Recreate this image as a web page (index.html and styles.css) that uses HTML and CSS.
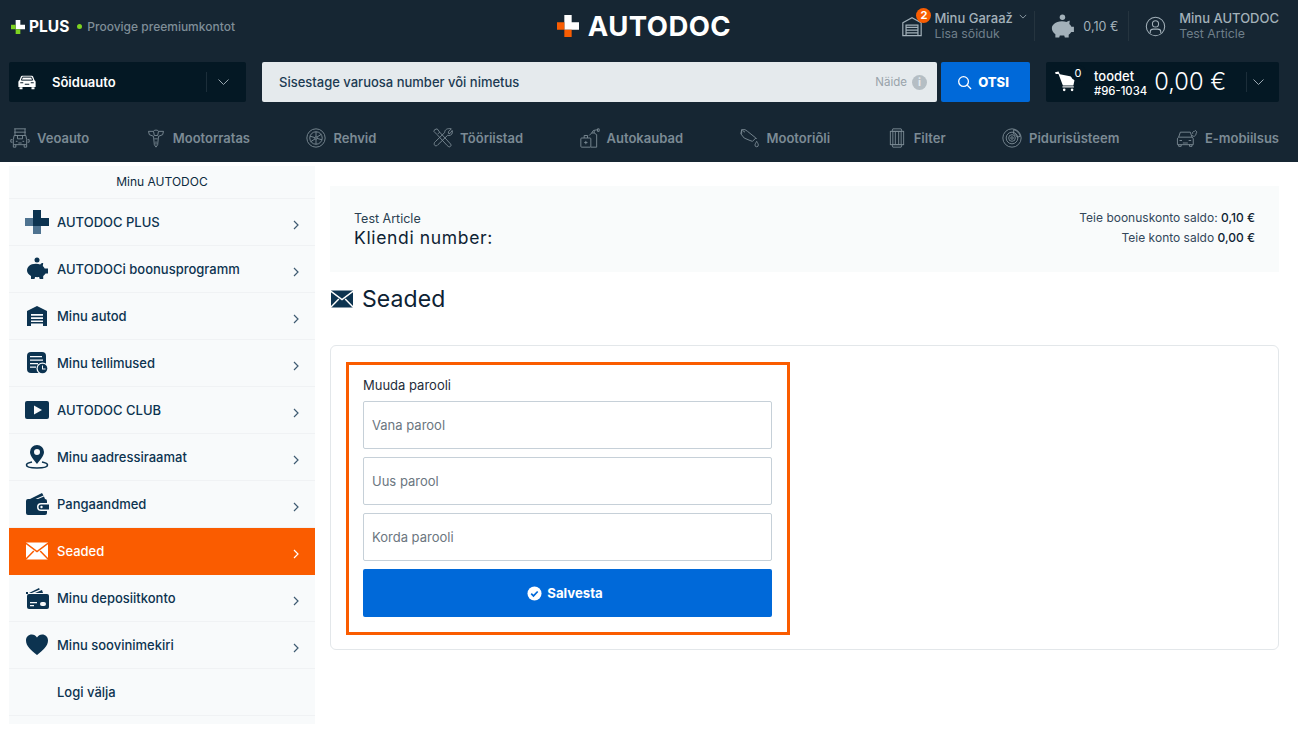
FILE: index.html
```html
<!DOCTYPE html>
<html lang="et">
<head>
<meta charset="utf-8">
<title>AUTODOC – Seaded</title>
<link rel="stylesheet" href="styles.css">
</head>
<body>
<header class="hdr">
  <div class="top">
    <div class="plus">
      <svg class="plus-ic" viewBox="0 0 24 24"><path fill="#fff" d="M8 0h8v8h8v8H8z"/><path fill="#7ed321" d="M0 8h8v8h8v8H8v-8H0z"/></svg>
      <span class="plus-t">PLUS</span>
      <span class="dot"></span>
      <span class="plus-s">Proovige preemiumkontot</span>
    </div>
    <div class="logo">
      <svg class="logo-ic" viewBox="0 0 24 24"><path fill="#fff" d="M8 0h8v8h8v8H8z"/><path fill="#f95d02" d="M0 8h8v8h8v8H8v-8H0z"/></svg>
      <span class="logo-t">AUTODOC</span>
    </div>
    <div class="acct">
      <div class="garage">
        <span class="garage-ic">
          <svg class="ic-g" viewBox="0 0 24 24"><path d="M2 8.500 12 3l10 5.500V22.500H2zM5.500 22.500V11h13v11.500M5.500 13.500h13M5.500 16.500h13M5.500 19.500h13"/></svg>
          <span class="badge">2</span>
        </span>
        <div class="acct-txt">
          <div class="a1">Minu Garaaž <svg class="chev-s" viewBox="0 0 10 6"><path d="M1 1l4 4 4-4"/></svg></div>
          <div class="a2">Lisa sõiduk</div>
        </div>
      </div>
      <div class="bonus">
        <svg class="pig-top" viewBox="2.500 .5 21 22"><circle cx="12.500" cy="3.500" r="2.500"/><path d="M5 9.500c1.500-1.500 4-2.300 7-2.300 1.600 0 3 .2 4.200.7.800-.8 2-1.300 3-1.300l-.4 3c.9.700 1.500 1.500 1.900 2.500H23v5h-2.400c-.6 1-1.400 1.800-2.400 2.400V22h-3.500l-.6-1.900c-1.300.2-2.700.2-4 0L9.500 22H6v-3c-2-1.400-3.200-3.300-3.200-5.500 0-1.600.8-3 2.200-4z"/></svg>
        <span class="bonus-v">0,10 €</span>
      </div>
      <div class="user">
        <svg class="ic-u" viewBox="0 0 24 24"><circle cx="12" cy="12" r="10.500"/><circle cx="12" cy="9" r="3.500"/><path d="M6 19.500v-1.500c0-2 1.500-3 3.500-3h5c2 0 3.500 1 3.500 3v1.500"/></svg>
        <div class="acct-txt">
          <div class="a1">Minu AUTODOC</div>
          <div class="a2">Test Article</div>
        </div>
      </div>
    </div>
  </div>

  <div class="bar">
    <div class="veh">
      <svg class="veh-ic" viewBox="0 0 24 20"><path d="M5.500 1.500h13c.8 0 1.300.4 1.600 1.100L22 7.500c1 .6 1.500 1.500 1.500 2.500v6.500h-23V10c0-1 .5-1.900 1.500-2.500l1.900-4.900c.3-.7.800-1.100 1.600-1.100z"/><path class="veh-cut" d="M6 3.500h12l1.500 4h-15zM3 11h4M17 11h4M9 13h6"/><path d="M2 17h4v2.500H2zM18 17h4v2.500h-4z"/></svg>
      <span class="veh-t">Sõiduauto</span>
      <span class="veh-chev"><svg class="chev" viewBox="0 0 12 8"><path d="M1 1.500l5 5 5-5"/></svg></span>
    </div>
    <div class="srch">
      <input class="srch-in" type="text" placeholder="Sisestage varuosa number või nimetus">
      <span class="naide">Näide</span>
      <span class="info">i</span>
    </div>
    <button class="otsi" type="button">
      <svg class="otsi-ic" viewBox="0 0 16 16"><circle cx="7" cy="7" r="5.200"/><path d="M11 11l4 4"/></svg>
      OTSI
    </button>
    <div class="cart">
      <span class="cart-ic">
        <svg class="cart-sv" viewBox="0 0 24 24"><path d="M0 1.500l4-.8 1.500 3 17.500 3.500-2 9.300H9L4 3.500 .8 3.500z"/><path d="M8.500 17.500h13v1.300h-13z"/><circle cx="10.500" cy="21.500" r="1.500"/><circle cx="19.500" cy="21.500" r="1.500"/></svg>
        <span class="cart-n">0</span>
      </span>
      <div class="cart-t"><div class="c1">toodet</div><div class="c2">#96-1034</div></div>
      <span class="cart-p">0,00 €</span>
      <span class="cart-chev"><svg class="chev" viewBox="0 0 12 8"><path d="M1 1.500l5 5 5-5"/></svg></span>
    </div>
  </div>

  <nav class="nav">
    <a class="nav-i"><svg viewBox="0 0 24 24"><path d="M5 1h14M6 1v8M18 1v8M5 5h14M5 9h14l1 5v6H4v-6zM3 14H1v3h2M21 14h2v3h-2M4 20v3h3v-3M20 20v3h-3v-3M7 16h2M15 16h2M10 18h4M9 9v4h6V9"/></svg>Veoauto</a>
    <a class="nav-i"><svg viewBox="0 0 24 24"><path d="M9 4c0-2 6-2 6 0l-1 5h-4zM9 4H3l1 4 5 2M15 4h6l-1 4-5 2M9 10l1 10 2 3 2-3 1-10M10 13h4M12 16v4"/></svg>Mootorratas</a>
    <a class="nav-i"><svg viewBox="0 0 24 24"><circle cx="12" cy="12" r="11"/><circle cx="12" cy="12" r="7.500"/><circle cx="12" cy="12" r="1.500"/><path d="M12 4.500v6M12 13.500v6M4.800 9.800l5.800 1.700M13.400 12.500l5.800 1.700M5.500 16.500l5.500-3.500M13 11l5.500-3.500"/></svg>Rehvid</a>
    <a class="nav-i"><svg viewBox="0 0 24 24"><path d="M2 2l3-1 3 4 12 13c2 2 2 3 1 4s-2 1-4-1L5 8 1 4zM6 7l2-2"/><path d="M22 1l-3.500 3.500 0 2 2 0L23 3c1 3-.5 6-4 6l-1.500-.2L6 20c-1.500 2-5 2-4.500-1.500 0-1 .5-1.500 1.200-2L14 5.500C14 2 17 0 22 1z"/></svg>Tööriistad</a>
    <a class="nav-i"><svg viewBox="0 0 24 24"><rect x="1" y="12" width="12" height="11" rx="1"/><path d="M5 12V9h4v3M7 15.500v4M5 17.500h4M13 23h7V8l-3-2h-3l-3 3M14 6l2-3 5-1M21 1v3h2V1zM17 6V3"/></svg>Autokaubad</a>
    <a class="nav-i"><svg viewBox="0 0 24 24"><path d="M2 2h4l3 2 10 8-4 4-3-1-7-3-4-5zM2 2v5M19 12l1 1M6 5l-3-2"/><path d="M20 16c-1 2-2 3-2 4.500a2 2 0 0 0 4 0c0-1.500-1-2.500-2-4.500z"/></svg>Mootoriõli</a>
    <a class="nav-i"><svg viewBox="0 0 24 24"><rect x="4" y="4" width="16" height="16"/><path d="M7 1h10l1 3H6zM7 23h10l1-3H6zM7 4v16M10 4v16M14 4v16M17 4v16"/></svg>Filter</a>
    <a class="nav-i"><svg viewBox="0 0 24 24"><circle cx="12" cy="12" r="11"/><circle cx="12" cy="12" r="7"/><circle cx="12" cy="12" r="4"/><circle cx="12" cy="12" r="1.500"/><path d="M14 2c4 1 7 4 8 8l-4 1c-.5-2-2-3.500-4-4z"/></svg>Pidurisüsteem</a>
    <a class="nav-i"><svg class="wide" viewBox="0 0 26 24"><path d="M5 5h12l2 6c1 .5 1.500 1.200 1.500 2v7H1.500v-7c0-.8.500-1.500 1.500-2zM3 11h16M4 15h3M15 15h3M8 18h6M3 20v2h3v-2M16 20v2h3v-2"/><path d="M19 9l2 1c2 0 3-2 3-4l1-1-2-2-1 1c-2 0-3 2-2 3"/></svg>E-mobiilsus</a>
  </nav>
</header>

<div class="page">
  <aside class="side">
    <div class="side-h">Minu AUTODOC</div>
    <a class="si"><span class="si-ic"><svg viewBox="0 0 24 24"><path fill="#0c3350" d="M8 0h8v8h8v8H8z"/><path fill="#4f7390" d="M0 8h8v8h8v8H8v-8H0z"/></svg></span><span class="si-t">AUTODOC PLUS</span><svg class="si-ch" viewBox="0 0 6 10"><path d="M1 1l4 4-4 4"/></svg></a>
    <a class="si"><span class="si-ic"><svg class="fill" viewBox="0 0 24 24"><circle cx="12" cy="3" r="2.500"/><path d="M4 9c1.500-1.500 4-2.300 7-2.300 1.600 0 3 .2 4.200.7.800-.8 2-1.300 3-1.300l-.4 3c.9.700 1.500 1.500 1.900 2.500H23v5h-2.400c-.6 1-1.400 1.800-2.400 2.400V22h-3.500l-.6-1.900c-1.300.2-2.700.2-4 0L9.500 22H6v-3c-2.500-1.400-4-3.300-4-5.500 0-1.700.8-3.200 2-4.500z"/></svg></span><span class="si-t">AUTODOCi boonusprogramm</span><svg class="si-ch" viewBox="0 0 6 10"><path d="M1 1l4 4-4 4"/></svg></a>
    <a class="si"><span class="si-ic"><svg class="fill" viewBox="0 0 24 24"><path d="M2 7l10-5 10 5v15H2z"/><path class="cut" d="M6 10h12v1.700H6zM6 13.200h12v1.700H6zM6 16.400h12v1.700H6zM6 19.600h12V22H6z"/></svg></span><span class="si-t">Minu autod</span><svg class="si-ch" viewBox="0 0 6 10"><path d="M1 1l4 4-4 4"/></svg></a>
    <a class="si"><span class="si-ic"><svg class="fill" viewBox="0 0 24 24"><rect x="2" y="1" width="19" height="21" rx="4"/><path class="cut" d="M5 5h12v1.300H5zM5 8.500h13v1.300H5zM5 12h8v1.300H5zM5 15.500h6v1.300H5z"/><circle class="cut" cx="17.500" cy="17.500" r="6"/><circle cx="17.500" cy="17.500" r="4.800"/><path class="cut" d="M17 14.500h1v3h2.500v1H17z"/></svg></span><span class="si-t">Minu tellimused</span><svg class="si-ch" viewBox="0 0 6 10"><path d="M1 1l4 4-4 4"/></svg></a>
    <a class="si"><span class="si-ic"><svg class="fill" viewBox="0 0 24 24"><rect x="0" y="3" width="24" height="18" rx="2"/><path class="cut" d="M9 7.500l8 4.500-8 4.500z"/></svg></span><span class="si-t">AUTODOC CLUB</span><svg class="si-ch" viewBox="0 0 6 10"><path d="M1 1l4 4-4 4"/></svg></a>
    <a class="si"><span class="si-ic"><svg class="fill" viewBox="0 0 24 24"><path fill-rule="evenodd" d="M12 0a7 7 0 0 1 7 7c0 4-4 8-7 12-3-4-7-8-7-12a7 7 0 0 1 7-7zm0 4a3 3 0 1 0 0 6 3 3 0 0 0 0-6z"/><path fill="none" stroke="#0c3350" stroke-width="1.600" d="M7 17c-3 .6-5.500 1.600-5.500 3 0 2 5 3 10.500 3s10.500-1 10.500-3c0-1.400-2.500-2.400-5.500-3"/></svg></span><span class="si-t">Minu aadressiraamat</span><svg class="si-ch" viewBox="0 0 6 10"><path d="M1 1l4 4-4 4"/></svg></a>
    <a class="si"><span class="si-ic"><svg class="fill" viewBox="0 0 24 24"><path d="M5 7l12-6 1.500 2.500-8 3.500zM13 7l6-2.500L20 7z"/><path d="M3 7h17a2 2 0 0 1 2 2v2h-6a4 4 0 0 0 0 8h6v2a2 2 0 0 1-2 2H3a2 2 0 0 1-2-2V9a2 2 0 0 1 2-2z"/><path d="M16 12.500h8v5h-8a2.500 2.500 0 0 1 0-5z"/><circle class="cut" cx="16.500" cy="15" r="1.200"/></svg></span><span class="si-t">Pangaandmed</span><svg class="si-ch" viewBox="0 0 6 10"><path d="M1 1l4 4-4 4"/></svg></a>
    <a class="si on"><span class="si-ic"><svg class="env env-w" viewBox="0 0 24 24"><path d="M1 3.500h22v17H1z"/><path class="env-l" d="M0 3.500l12 9 12-9M0 21l8.800-9M24 21l-8.800-9"/></svg></span><span class="si-t">Seaded</span><svg class="si-ch" viewBox="0 0 6 10"><path d="M1 1l4 4-4 4"/></svg></a>
    <a class="si"><span class="si-ic"><svg class="fill" viewBox="0 0 24 24"><path d="M4 7l10-5 .8 1.500-8 3.500zM10 7l7-3 1 3z"/><path d="M1 6h2v2H1z"/><rect x="2" y="8" width="22" height="15" rx="2"/><path class="cut" d="M5 16h7v1.300H5zM5 19h4v1.300H5z"/><rect class="cut" x="15" y="16" width="6" height="4" rx="2"/></svg></span><span class="si-t">Minu deposiitkonto</span><svg class="si-ch" viewBox="0 0 6 10"><path d="M1 1l4 4-4 4"/></svg></a>
    <a class="si"><span class="si-ic"><svg class="fill" viewBox="0 0 24 24"><path d="M12 22C6 17 1 13 1 7.500 1 4 3.500 1.500 6.800 1.500c2.200 0 4 1 5.200 3 1.200-2 3-3 5.200-3C20.500 1.500 23 4 23 7.500 23 13 18 17 12 22z"/></svg></span><span class="si-t">Minu soovinimekiri</span><svg class="si-ch" viewBox="0 0 6 10"><path d="M1 1l4 4-4 4"/></svg></a>
    <a class="si"><span class="si-ic"></span><span class="si-t">Logi välja</span></a>
  </aside>

  <main class="main">
    <section class="info-box">
      <div>
        <div class="ib-n">Test Article</div>
        <div class="ib-k">Kliendi number:</div>
      </div>
      <div class="ib-r">
        <div>Teie boonuskonto saldo: <b>0,10 €</b></div>
        <div>Teie konto saldo <b>0,00 €</b></div>
      </div>
    </section>
    <h1 class="title"><svg class="env env-d" viewBox="0 0 24 24"><path d="M1 3.500h22v17H1z"/><path class="env-l" d="M0 3.500l12 9 12-9M0 21l8.800-9M24 21l-8.800-9"/></svg>Seaded</h1>
    <section class="card">
      <form class="pw">
        <label class="pw-l">Muuda parooli</label>
        <input class="pw-i" type="password" placeholder="Vana parool">
        <input class="pw-i" type="password" placeholder="Uus parool">
        <input class="pw-i" type="password" placeholder="Korda parooli">
        <button class="save" type="button"><svg class="save-ic" viewBox="0 0 16 16"><circle cx="8" cy="8" r="7.500"/><path d="M4.500 8.200l2.400 2.400 4.500-4.700"/></svg>Salvesta</button>
      </form>
    </section>
  </main>
</div>
</body>
</html>
```

FILE: styles.css
```css
* { box-sizing: border-box; }
html, body { margin: 0; padding: 0; }
body { font-family: Inter, "Liberation Sans", sans-serif; color: #0c3350; background: #fff; font-size: 13px; }
svg { display: block; flex: none; }

.hdr { height: 162px; background: #162633; }

.top { height: 52px; padding: 0 19px 0 11px; display: grid; grid-template-columns: 1fr auto 1fr; align-items: center; }
.plus { display: flex; align-items: center; }
.plus-ic { width: 14px; height: 14px; margin-top: 1px; }
.plus-t { margin-left: 4px; color: #fff; font-size: 15.500px; font-weight: 700; }
.dot { width: 5px; height: 5px; border-radius: 50%; background: #7ed321; margin-left: 8px; }
.plus-s { margin-left: 5px; color: #7f8e98; font-size: 12px; font-weight: 500; }

.logo { display: flex; align-items: center; margin-right: 2px; }
.logo-ic { width: 22px; height: 22px; }
.logo-t { margin-left: 9px; color: #fff; font-size: 27.500px; font-weight: 700; letter-spacing: .45px; line-height: 30px; }

.acct { display: flex; justify-content: flex-end; align-items: center; }
.garage { display: flex; align-items: center; padding-right: 7px; border-right: 1px solid #25343f; height: 30px; }
.garage-ic { position: relative; width: 22px; height: 22px; margin-right: 11px; }
.ic-g { width: 22px; height: 22px; fill: none; stroke: #a3b1ba; stroke-width: 1.300; }
.badge { position: absolute; top: -7px; left: 15px; width: 15px; height: 15px; border-radius: 50%; background: #f95d02; color: #fff; font-size: 11px; font-weight: 700; line-height: 15px; text-align: center; }
.acct-txt { display: flex; flex-direction: column; }
.a1 { display: flex; align-items: center; color: #a3b1ba; font-size: 13px; font-weight: 500; line-height: 16px; white-space: pre; }
.a2 { color: #6f7f8a; font-size: 12.300px; line-height: 16px; }
.chev-s { width: 8px; height: 5px; margin: -3px 0 0 3px; fill: none; stroke: #a3b1ba; stroke-width: 1; }
.bonus { display: flex; align-items: center; height: 30px; padding: 0 10px 0 16px; border-right: 1px solid #25343f; }
.pig-top { width: 24px; height: 24px; fill: #a3b1ba; }
.bonus-v { margin-left: 8px; color: #a3b1ba; font-size: 12.500px; }
.user { display: flex; align-items: center; margin-left: 16px; }
.ic-u { width: 21px; height: 21px; margin-right: 13px; fill: none; stroke: #a3b1ba; stroke-width: 1.200; }

.bar { margin-top: 10px; height: 40px; padding: 0 19px 0 9px; display: flex; }
.veh { width: 237px; background: #041824; border-radius: 2px; display: flex; align-items: center; padding-left: 9px; }
.veh-ic { width: 18px; height: 16px; fill: #fff; }
.veh-cut { fill: none; stroke: #041824; stroke-width: 1.300; }
.veh-t { margin-left: 16px; color: #fff; font-size: 13px; font-weight: 600; flex: 1; }
.veh-chev { width: 40px; height: 20px; border-left: 1px solid #1c2e3a; display: flex; align-items: center; justify-content: center; padding-right: 6px; }
.chev { width: 13px; height: 8px; fill: none; stroke: #9aa8b1; stroke-width: 1; }

.srch { margin-left: 16px; width: 675px; background: #e5eaed; border-radius: 2px; display: flex; align-items: center; padding-right: 10px; }
.srch-in { flex: 1; min-width: 0; height: 40px; border: 0; background: none; padding: 0 0 0 17px; font: 500 13px Inter, sans-serif; color: #0c3350; outline: none; }
.srch-in::placeholder { color: #1c3a52; opacity: 1; }
.naide { color: #98a3aa; font-size: 11.500px; }
.info { margin-left: 5px; width: 15px; height: 15px; border-radius: 50%; background: #b5bec4; color: #e5eaed; font-size: 11px; font-weight: 700; line-height: 15px; text-align: center; }
.otsi { margin-left: 4px; width: 89px; height: 40px; border: 0; border-radius: 2px; background: #0069d9; color: #fff; font: 800 13px Inter, sans-serif; display: flex; align-items: center; justify-content: center; gap: 6px; padding: 0 5px 0 0; }
.otsi-ic { width: 15px; height: 15px; fill: none; stroke: #fff; stroke-width: 1.400; }

.cart { margin-left: 16px; width: 233px; background: #041824; border-radius: 2px; display: flex; align-items: center; padding-left: 9px; }
.cart-ic { position: relative; width: 21px; height: 21px; margin-top: -2px; }
.cart-sv { width: 21px; height: 21px; fill: #fff; }
.cart-n { position: absolute; top: -6px; left: 15px; width: 16px; height: 16px; border-radius: 50%; background: #041824; color: #fff; font-size: 11px; line-height: 16px; text-align: center; }
.cart-t { margin-left: 18px; color: #fff; padding-top: 2px; }
.c1 { font-size: 13px; font-weight: 500; line-height: 15px; }
.c2 { font-size: 11.300px; font-weight: 500; line-height: 14px; }
.cart-p { margin-left: 7px; color: #fff; font-size: 23.700px; font-weight: 300; flex: 1; margin-top: -1px; }
.cart-chev { width: 33px; height: 20px; border-left: 1px solid #1c2e3a; display: flex; align-items: center; justify-content: center; padding-right: 9px; }

.nav { height: 60px; padding: 24px 19px 0 10px; display: flex; justify-content: space-between; }
.nav-i { height: 24px; display: flex; align-items: center; gap: 7px; color: #7c8b95; font-size: 13px; font-weight: 600; }
.nav-i svg { width: 20px; height: 20px; fill: none; stroke: #7c8b95; stroke-width: 1.100; }
.nav-i svg.wide { width: 22px; }

.page { display: flex; padding: 4px 19px 0 9px; gap: 15px; align-items: flex-start; }
.side { width: 306px; flex: none; background: #f8fafb; padding-bottom: 8px; }
.side-h { height: 33px; text-align: center; font-size: 12px; line-height: 31px; border-bottom: 1px solid #f0f2f4; color: #0c2a40; }
.si { height: 47px; border-bottom: 1px solid #f0f2f4; display: flex; align-items: center; color: #0c3350; font-size: 13px; font-weight: 500; padding-bottom: 1px; }
.si.on { background: #fa5c00; color: #fff; border-bottom-color: #fa5c00; }
.si-ic { width: 24px; margin: 0 8px 0 16px; flex: none; }
.si-ic svg { width: 24px; height: 24px; }
.si-t { flex: 1; }
.fill { fill: #0c3350; }
.cut { fill: #f8fafb; }
.si-ch { width: 6px; height: 10px; margin: 7px 16px 0 0; fill: none; stroke: #3f5b72; stroke-width: 1.200; }
.si.on .si-ch { stroke: #fff; }
.env-w { fill: #fff; }
.env-d { fill: #0c3350; }
.env-l { fill: none; stroke-width: 1.500; }
.env-w .env-l { stroke: #fa5c00; }
.env-d .env-l { stroke: #fff; }

.main { flex: 1; min-width: 0; padding-top: 20px; }
.info-box { height: 86px; background: #f9fbfb; padding: 24px 24px 0; display: flex; justify-content: space-between; }
.ib-n { font-size: 12.500px; color: #2a3f50; line-height: 17px; }
.ib-k { font-size: 17.500px; font-weight: 400; letter-spacing: .65px; color: #0d2233; line-height: 22px; }
.ib-r { text-align: right; font-size: 12px; line-height: 20px; color: #33475a; margin-top: -2px; }
.ib-r b { font-weight: 500; color: #0d2233; }
.title { margin: 13px 0 0; height: 28px; display: flex; align-items: center; font-size: 23px; font-weight: 400; letter-spacing: .1px; color: #0d2233; line-height: 28px; }
.title .env { margin-right: 8px; width: 24px; height: 24px; }
.card { margin-top: 32px; height: 305px; border: 1px solid #e3e7ea; border-radius: 6px; background: #fff; padding: 16px 15px; }
.pw { width: 444px; height: 273px; border: 3px solid #fa5c00; padding: 11px 15px 0 14px; display: flex; flex-direction: column; }
.pw-l { font-size: 13px; font-weight: 400; color: #1f2d3a; line-height: 18px; margin-bottom: 7px; }
.pw-i { height: 48px; width: 100%; flex: none; border: 1px solid #c6d0d8; border-radius: 2px; background: #fff; padding: 0 8px; margin-bottom: 8px; font: 400 13px Inter, sans-serif; color: #333; outline: none; }
.pw-i::placeholder { color: #6b7680; opacity: 1; }
.save { height: 48px; flex: none; border: 0; border-radius: 2px; background: #0069d9; color: #fff; font: 700 13.200px Inter, sans-serif; display: flex; align-items: center; justify-content: center; gap: 5px; padding: 0 5px 0 0; }
.save-ic { width: 15px; height: 15px; }
.save-ic circle { fill: #fff; }
.save-ic path { fill: none; stroke: #0069d9; stroke-width: 1.800; }
```
